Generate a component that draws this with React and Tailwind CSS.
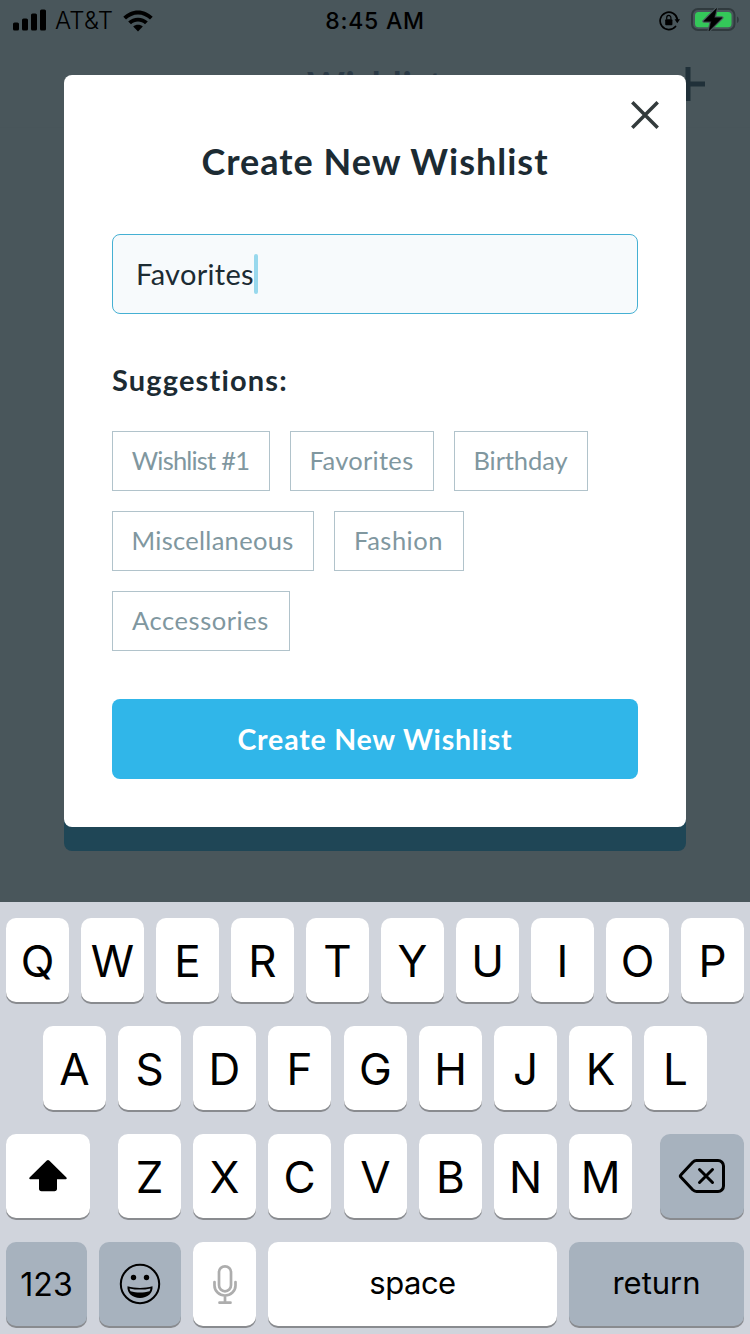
const LATO = "font-['Lato','Open_Sans',sans-serif]";

function SignalIcon() {
  return (
    <svg width="34" height="22" viewBox="0 0 34 22" className="block">
      <rect x="0" y="13.5" width="6" height="8" rx="1.6" />
      <rect x="9" y="9.5" width="6" height="12" rx="1.6" />
      <rect x="18" y="4.5" width="6" height="17" rx="1.6" />
      <rect x="27" y="0.5" width="6" height="21" rx="1.6" />
    </svg>
  );
}

function WifiIcon() {
  return (
    <svg width="30" height="22" viewBox="0 0 30 22" className="block">
      <path d="M0.3 6.8C4.2 2.9 9.3 0.4 15 0.4s10.8 2.5 14.7 6.4l-2.7 2.8C23.800 6.500 19.600 4.500 15 4.500S6.200 6.500 3 9.600z" />
      <path d="M5.200 11.500C7.900 9.100 11.200 7.700 15 7.700s7.100 1.400 9.800 3.800l-2.800 2.800c-1.900-1.700-4.300-2.700-7-2.700s-5.100 1-7 2.700z" />
      <path d="M10.200 16.400c1.300-1 2.900-1.600 4.800-1.600s3.500.6 4.800 1.600L15 21.600z" />
    </svg>
  );
}

function RotationLockIcon() {
  return (
    <svg width="22" height="22" viewBox="0 0 22 22" className="block">
      <path d="M16.500 16.500A8.700 8.700 0 1 1 18.400 9.500" fill="none" stroke="#000" strokeWidth="1.700" strokeLinecap="round" />
      <path d="M15.600 9.300h5.400l-2.700 4z" />
      <rect x="6.200" y="9.300" width="7.200" height="5.900" rx="0.900" />
      <path d="M7.700 9.500V7.700a2.100 2.300 0 0 1 4.200 0v1.800" fill="none" stroke="#000" strokeWidth="1.200" />
    </svg>
  );
}

function BatteryIcon() {
  return (
    <svg width="49" height="26" viewBox="0 0 49 26" className="block">
      <rect x="1" y="3" width="42.500" height="21" rx="6" fill="none" stroke="#303a3e" strokeWidth="2" />
      <rect x="4" y="6" width="36.500" height="15.200" rx="3.500" fill="#34c759" />
      <path d="M46 10.500c2.400 1 2.400 5.500 0 6.500z" fill="#303a3e" />
      <path d="M25.500 2.500 12.800 15.300h7.500L18 24.800 31 11.800h-7.800z" stroke="#49565b" strokeWidth="3" strokeLinejoin="round" />
      <path d="M25.500 2.500 12.800 15.300h7.500L18 24.800 31 11.800h-7.800z" stroke="#000" strokeWidth="0.600" strokeLinejoin="round" />
    </svg>
  );
}

function StatusBar() {
  return (
    <div className="grid h-10 grid-cols-3 items-center font-['Inter',sans-serif] text-[23px] text-black">
      <div className="flex items-center pl-[13px]">
        <SignalIcon />
        <span className="ml-[8px] w-[60px] whitespace-nowrap pt-0.5 text-[24px] font-light leading-8 tracking-[0.200px]">AT&amp;T</span>
        <span className="ml-[8px] pt-px"><WifiIcon /></span>
      </div>
      <div className="pt-0.5 text-center font-medium leading-8 tracking-[0.750px]">8:45 AM</div>
      <div className="flex items-center justify-end pr-[10px]">
        <span className="pt-px"><RotationLockIcon /></span>
        <span className="-mt-0.5 ml-[10px]"><BatteryIcon /></span>
      </div>
    </div>
  );
}

function Suggestion({ label, width, spacing }) {
  return (
    <button className={`h-[60px] whitespace-nowrap border border-[#b1c3cb] pb-0.5 pr-px text-[25.500px] text-[#80979f] ${width} ${spacing}`}>
      {label}
    </button>
  );
}

function Modal() {
  return (
    <div className={`absolute left-[64px] top-[75px] flex h-[752px] w-[622px] flex-col rounded-lg bg-white px-12 text-[#1c2b33] ${LATO}`}>
      <div className="-mr-[21px] flex justify-end pt-[26px]">
        <svg width="28" height="28" viewBox="0 0 28 28" fill="none" stroke="#333b3c" strokeWidth="3.500" strokeLinecap="butt">
          <path d="M1.300 1.300l25.400 25.400M26.700 1.300l-25.400 25.400" />
        </svg>
      </div>
      <h1 className="mt-[10px] h-11 whitespace-nowrap text-center text-[36px] font-bold leading-[44px] tracking-[1px]">Create New Wishlist</h1>
      <div className="mt-[51px] flex h-[80px] items-center rounded-lg border border-[#45b0d3] bg-[#f7fafc] pl-[23px]">
        <span className="text-[29px] tracking-[0.300px]">Favorites</span>
        <span className="h-10 w-1 rounded-sm bg-[#98d8ed]" />
      </div>
      <h2 className="mt-[48px] h-9 text-[29px] font-bold leading-9 tracking-[1.150px]">Suggestions:</h2>
      <div className="mt-[33px] flex flex-col gap-5">
        <div className="flex gap-5">
          <Suggestion label="Wishlist #1" width="w-[158px]" spacing="tracking-[-0.800px]" />
          <Suggestion label="Favorites" width="w-[144px]" spacing="tracking-[0.300px]" />
          <Suggestion label="Birthday" width="w-[134px]" spacing="tracking-[-0.100px]" />
        </div>
        <div className="flex gap-5">
          <Suggestion label="Miscellaneous" width="w-[202px]" spacing="tracking-[0.300px]" />
          <Suggestion label="Fashion" width="w-[130px]" spacing="tracking-[0.500px]" />
        </div>
        <div className="flex">
          <Suggestion label="Accessories" width="w-[178px]" spacing="tracking-[0.550px]" />
        </div>
      </div>
      <button className="mt-12 h-[80px] rounded-lg bg-[#30b6e9] text-[28.500px] font-bold tracking-[0.800px] text-white">Create New Wishlist</button>
    </div>
  );
}

function Key({ children, className = "w-[63px]", dark = false }) {
  return (
    <button className={`flex h-[84px] items-center justify-center rounded-[10px] shadow-[0_2px_0_#898b8f] ${dark ? "bg-[#a7b2be]" : "bg-white"} ${className}`}>
      {children}
    </button>
  );
}

function Letters({ letters, shifted }) {
  return letters.split("").map((l) => (
    <Key key={l} className={l === shifted ? "ml-px w-[63px]" : "w-[63px]"}>
      <span className="pt-px text-[44px] leading-none">{l}</span>
    </Key>
  ));
}

function Keyboard() {
  return (
    <div className="flex h-[432px] flex-col gap-6 bg-[#d0d4dc] px-[6px] pt-4 font-['Inter',sans-serif] text-black">
      <div className="flex gap-3">
        <Letters letters="QWERTYUIOP" />
      </div>
      <div className="flex gap-3 pl-[37px]">
        <Letters letters="ASDFGHJKL" shifted="G" />
      </div>
      <div className="flex justify-between">
        <Key className="w-[84px]">
          <svg width="38" height="34" viewBox="0 0 38 34">
            <path d="M17.800 1.500 0.800 18.300c-1 1-.5 2 .8 2H10v9.500c0 1.500.9 2.500 2.500 2.500h13c1.600 0 2.500-1 2.500-2.500v-9.500h8.400c1.300 0 1.800-1 .8-2L20.200 1.500c-.8-.8-1.600-.8-2.400 0z" />
          </svg>
        </Key>
        <div className="flex gap-3">
          <Letters letters="ZXCVBNM" shifted="V" />
        </div>
        <Key dark className="w-[84px]">
          <svg width="48" height="36" viewBox="0 0 48 36" fill="none" stroke="#000" strokeWidth="3" strokeLinecap="round" strokeLinejoin="round">
            <path d="M18.500 2.500h21.500a5.500 5.500 0 0 1 5.500 5.500v20a5.500 5.500 0 0 1-5.500 5.500H18.500c-1.500 0-2.800-.7-3.800-1.700L3 19.300c-.8-.8-.8-1.800 0-2.600L14.700 4.200c1-1 2.300-1.700 3.800-1.700z" />
            <path d="M21.500 11.500l13 13M34.500 11.500l-13 13" />
          </svg>
        </Key>
      </div>
      <div className="flex gap-3">
        <Key dark className="w-[81px]">
          <span className="pt-0.5 text-[32px] leading-none">123</span>
        </Key>
        <Key dark className="w-[82px]">
          <svg width="42" height="42" viewBox="0 0 42 42">
            <circle cx="21" cy="21" r="19.200" fill="none" stroke="#000" strokeWidth="2" />
            <circle cx="14.500" cy="14.500" r="2.700" />
            <circle cx="27.500" cy="14.500" r="2.700" />
            <path d="M8.500 23.300c8 2.200 17 2.200 25 0 .7 7-5 11.700-12.500 11.700S7.800 30.300 8.500 23.300z" />
            <path d="M10.500 25.400c7 1.600 14 1.600 21 0-.2 1.200-.5 2-1 2.800-6 1.900-13 1.900-19 0-.5-.8-.8-1.600-1-2.800z" fill="#a7b2be" />
          </svg>
        </Key>
        <Key>
          <svg width="26" height="42" viewBox="0 0 26 42" fill="none" stroke="#adadad" strokeWidth="2.700" strokeLinecap="round">
            <rect x="7" y="3.300" width="12" height="25" rx="6" />
            <path d="M2.500 19v3.500a10.500 10 0 0 0 21 0V19M13 32.500v7M7.500 39.700h11" />
          </svg>
        </Key>
        <Key className="w-[289px]">
          <span className="pb-[3px] text-[31px] leading-none tracking-[-0.500px]">space</span>
        </Key>
        <Key dark className="w-[175px]">
          <span className="pb-[3px] text-[31px] leading-none">return</span>
        </Key>
      </div>
    </div>
  );
}

export default function App() {
  return (
    <div className="relative flex h-[1334px] w-[750px] flex-col overflow-hidden bg-[#49565b]">
      <StatusBar />
      <header className={`grid h-[88px] grid-cols-[1fr_auto_1fr] border-b border-[#48555a] text-[#243640] ${LATO}`}>
        <span />
        <div className="pt-[22px] text-[36px] font-bold leading-[44px] tracking-[0.700px] text-[#2b3a46]">Wishlist</div>
        <div className="flex justify-end pr-[45px] pt-[27px]">
          <svg width="34" height="34" viewBox="0 0 34 34" stroke="#203039" strokeWidth="5">
            <path d="M17 0v34M0 17h34" />
          </svg>
        </div>
      </header>
      <main className="flex flex-1 flex-col justify-end px-16 pb-[51px]">
        <div className="h-[80px] rounded-lg bg-[#1f4656]" />
      </main>
      <Keyboard />
      <Modal />
    </div>
  );
}
